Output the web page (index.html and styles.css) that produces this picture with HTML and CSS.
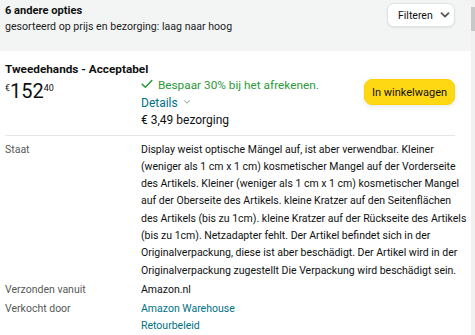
FILE: index.html
```html
<!DOCTYPE html>
<html lang="nl">
<head>
  <meta charset="UTF-8">
  <title>Andere opties</title>
  <link rel="stylesheet" href="styles.css">
</head>
<body>
  <div class="page">
    <div class="panel">
      <div class="header">
        <div>
          <h2 class="title">6 andere opties</h2>
          <div class="sorted">gesorteerd op prijs en bezorging: laag naar hoog</div>
        </div>
        <button class="filter-btn">Filteren
          <svg width="10" height="8" viewBox="0 0 10 8"><path d="M1.5 2.2 L5 5.6 L8.5 2.2" fill="none" stroke="#555" stroke-width="1.8" stroke-linecap="round" stroke-linejoin="round"/></svg>
        </button>
      </div>

      <div class="offer">
        <h3 class="condition">Tweedehands - Acceptabel</h3>
        <div class="offer-row">
          <div class="price"><span class="cur">€</span><span class="whole">152</span><span class="frac">40</span></div>
          <div class="offer-info">
            <div class="saving">
              <svg width="12" height="10" viewBox="0 0 12 10"><path d="M1.2 5.2 L4.4 8.3 L10.8 1.5" fill="none" stroke="#2b9a3a" stroke-width="1.6" stroke-linecap="round" stroke-linejoin="round"/></svg>
              Bespaar 30% bij het afrekenen.
            </div>
            <a class="details" href="#">Details
              <svg width="8" height="6" viewBox="0 0 8 6"><path d="M1.5 1.8 L4 4.2 L6.5 1.8" fill="none" stroke="#8a9a9c" stroke-width="1" stroke-linecap="round"/></svg>
            </a>
            <div class="shipping">€ 3,49 bezorging</div>
          </div>
          <button class="cart-btn">In winkelwagen</button>
        </div>
      </div>

      <div class="facts">
        <div class="fact">
          <div class="label">Staat</div>
          <div class="value desc">Display weist optische Mängel auf, ist aber verwendbar. Kleiner<br>
            (weniger als 1 cm x 1 cm) kosmetischer Mangel auf der Vorderseite<br>
            des Artikels. Kleiner (weniger als 1 cm x 1 cm) kosmetischer Mangel<br>
            auf der Oberseite des Artikels. kleine Kratzer auf den Seitenflächen<br>
            des Artikels (bis zu 1cm). kleine Kratzer auf der Rückseite des Artikels<br>
            (bis zu 1cm). Netzadapter fehlt. Der Artikel befindet sich in der<br>
            Originalverpackung, diese ist aber beschädigt. Der Artikel wird in der<br>
            Originalverpackung zugestellt Die Verpackung wird beschädigt sein.</div>
        </div>
        <div class="fact">
          <div class="label">Verzonden vanuit</div>
          <div class="value">Amazon.nl</div>
        </div>
        <div class="fact">
          <div class="label">Verkocht door</div>
          <div class="value">
            <a href="#">Amazon Warehouse</a>
            <a href="#">Retourbeleid</a>
          </div>
        </div>
      </div>
    </div>
    <div class="scrollbar"><div class="thumb"></div></div>
  </div>
</body>
</html>
```

FILE: styles.css
```css
body {
  margin: 0;
  font-family: Roboto, Arial, sans-serif;
  color: #0f1111;
  background: #fff;
}
.page {
  display: flex;
  height: 335px;
  overflow: hidden;
}
.panel {
  flex: 1;
  min-width: 0;
}
.scrollbar {
  width: 4px;
  background: #f1f1f1;
  padding-top: 7px;
}
.thumb {
  height: 24px;
  background: #c8c8c8;
}
.header {
  display: flex;
  justify-content: space-between;
  align-items: flex-start;
  background: #f3f5f5;
  height: 51px;
  padding: 3px 16px 0 5px;
  box-sizing: border-box;
}
.title {
  margin: 0;
  font-size: 11.1px;
  font-weight: 700;
  line-height: 16px;
}
.sorted {
  font-size: 10.6px;
  line-height: 16px;
  color: #222;
}
.filter-btn {
  display: flex;
  align-items: center;
  gap: 7px;
  height: 24px;
  width: 68px;
  padding: 0 0 0 10px;
  background: #fff;
  border: 1px solid #dfe3e3;
  border-radius: 7px;
  box-shadow: 0 1px 2px rgba(15, 17, 17, 0.08);
  font-family: inherit;
  font-size: 10.5px;
  color: #0f1111;
}
.offer {
  margin: 0 16px 0 5px;
  padding: 10px 0 5px;
  border-bottom: 1px solid #e7e7e7;
}
.condition {
  margin: 0;
  font-size: 11.75px;
  font-weight: 700;
  line-height: 16px;
}
.offer-row {
  display: flex;
  align-items: flex-start;
}
.price {
  width: 136px;
  line-height: 22px;
}
.cur {
  font-size: 9px;
  vertical-align: 7px;
}
.whole {
  font-size: 20px;
}
.frac {
  font-size: 9px;
  vertical-align: 7px;
}
.offer-info {
  flex: 1;
  font-size: 12px;
  line-height: 17.5px;
}
.saving {
  color: #2b9a3a;
  font-size: 11.8px;
}
.saving svg {
  margin-right: 2px;
}
.details {
  color: #007185;
  text-decoration: none;
}
.details svg {
  margin-left: 2px;
  vertical-align: 2px;
}
.cart-btn {
  margin-top: 2px;
  height: 26px;
  width: 91px;
  padding: 0;
  background: #ffd814;
  border: 1px solid #fcd200;
  border-radius: 8px;
  box-shadow: 0 2px 5px rgba(213, 217, 217, 0.5);
  font-family: inherit;
  font-size: 11px;
  color: #0f1111;
}
.facts {
  margin: 0 4px 0 5px;
  padding-top: 5px;
  font-size: 10.5px;
  line-height: 17.3px;
  color: #0f1111;
}
.fact {
  display: flex;
  margin-bottom: 2px;
}
.label {
  width: 136px;
  flex-shrink: 0;
  color: #565959;
}
.value {
  flex: 1;
}
.desc {
  white-space: nowrap;
}
.value a {
  display: block;
  color: #007185;
  text-decoration: none;
}
```
